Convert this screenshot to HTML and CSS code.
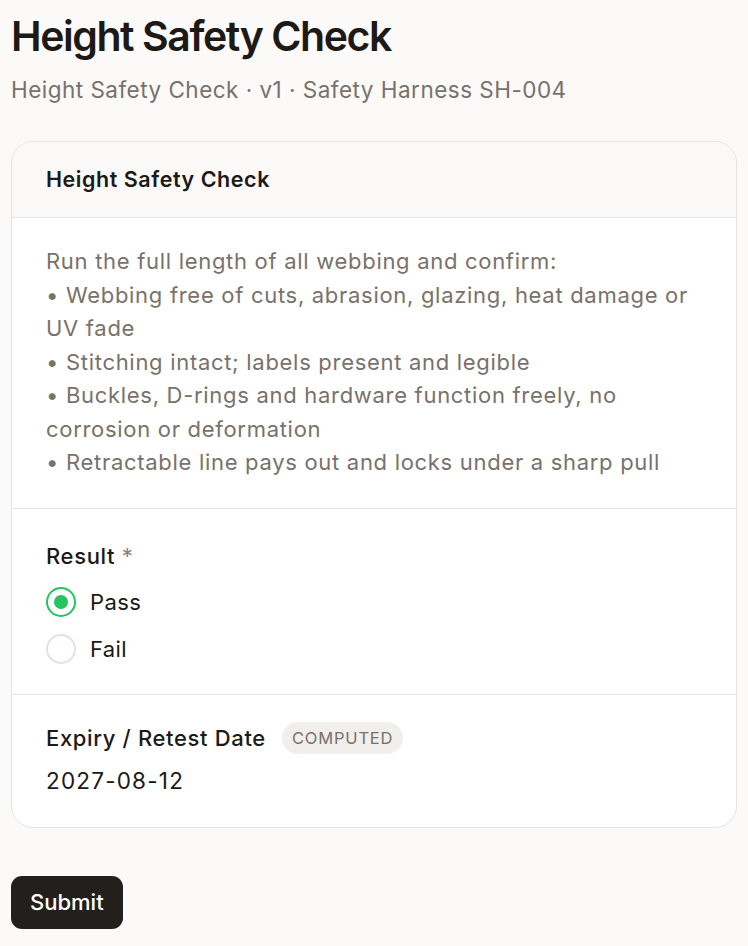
FILE: index.html
```html
<!DOCTYPE html>
<html lang="en">
<head>
<meta charset="utf-8">
<title>Height Safety Check</title>
<link rel="stylesheet" href="styles.css">
</head>
<body>
<main class="page">
  <header class="page-head">
    <h1 class="title">Height Safety Check</h1>
    <p class="subtitle">Height Safety Check · v1 · Safety Harness SH-004</p>
  </header>

  <section class="card">
    <div class="card-head">Height Safety Check</div>
    <div class="card-section desc">
      <p>Run the full length of all webbing and confirm:<br>
      • Webbing free of cuts, abrasion, glazing, heat damage or UV fade<br>
      • Stitching intact; labels present and legible<br>
      • Buckles, D-rings and hardware function freely, no corrosion or deformation<br>
      • Retractable line pays out and locks under a sharp pull</p>
    </div>
    <div class="card-section result">
      <div class="field-label">Result <span class="req">*</span></div>
      <div class="radios">
        <label class="radio-row"><span class="radio checked"></span><span>Pass</span></label>
        <label class="radio-row"><span class="radio"></span><span>Fail</span></label>
      </div>
    </div>
    <div class="card-section date">
      <div class="label-row">
        <span class="field-label">Expiry / Retest Date</span>
        <span class="badge">COMPUTED</span>
      </div>
      <div class="value">2027-08-12</div>
    </div>
  </section>

  <button class="submit" type="button">Submit</button>
</main>
</body>
</html>
```

FILE: styles.css
```css
* { box-sizing: border-box; }
html, body { margin: 0; padding: 0; }
body {
  background: #fbfaf8;
  font-family: Inter, "Noto Sans", sans-serif;
  color: #1c1917;
}
.page {
  padding: 9px 11px 16px 11px;
}
.title {
  margin: 0;
  font-size: 41px;
  line-height: 54px;
  font-weight: 600;
  letter-spacing: -0.035em;
  color: #1c1917;
}
.subtitle {
  margin: 10px 0 0 0;
  font-size: 22.5px;
  line-height: 33px;
  letter-spacing: 0.48px;
  color: #78716c;
}
.card {
  margin-top: 35px;
  background: #ffffff;
  border: 1.5px solid #e7e4df;
  border-radius: 22px;
  overflow: hidden;
}
.card-head {
  background: #faf9f7;
  padding: 22px 34px;
  font-size: 21.5px;
  line-height: 31px;
  font-weight: 600;
  letter-spacing: 0.55px;
  border-bottom: 1.5px solid #e7e4df;
}
.card-section {
  padding: 27px 34px 28px;
  border-bottom: 1.5px solid #e7e4df;
}
.card-section:last-child { border-bottom: 0; }
.desc p {
  margin: 0;
  font-size: 22px;
  line-height: 33.5px;
  letter-spacing: 0.7px;
  color: #78716c;
}
.result { padding-top: 31px; padding-bottom: 27px; }
.field-label {
  font-size: 22px;
  line-height: 33px;
  font-weight: 500;
  letter-spacing: 0.65px;
  color: #1c1917;
}
.req { color: #8a827a; font-weight: 400; }
.radios {
  display: flex;
  flex-direction: column;
  gap: 11px;
  margin-top: 11px;
}
.radio-row {
  display: flex;
  align-items: center;
  gap: 14px;
  height: 36px;
  font-size: 22px;
  letter-spacing: 0.4px;
  color: #1c1917;
}
.radio {
  width: 30px;
  height: 30px;
  border-radius: 50%;
  border: 2px solid #e6e1da;
  background: #fff;
  display: flex;
  align-items: center;
  justify-content: center;
}
.radio.checked { border-color: #22c55e; }
.radio.checked::after {
  content: "";
  width: 14px;
  height: 14px;
  border-radius: 50%;
  background: #22c55e;
}
.date { padding-top: 27px; padding-bottom: 30px; }
.label-row {
  display: flex;
  align-items: center;
  gap: 16px;
  height: 33px;
}
.badge {
  background: #f1efeb;
  color: #78716c;
  font-size: 16.5px;
  letter-spacing: 0.05em;
  font-weight: 400;
  padding: 0 10px;
  height: 32px;
  line-height: 32px;
  border-radius: 16px;
}
.value {
  margin-top: 9px;
  font-size: 22.5px;
  line-height: 33px;
  letter-spacing: 1.2px;
  color: #1c1917;
}
.submit {
  margin-top: 48px;
  background: #221f1c;
  color: #ffffff;
  border: 0;
  border-radius: 11px;
  height: 53px;
  padding: 0 19px;
  font-family: Inter, "Noto Sans", sans-serif;
  font-size: 22px;
  font-weight: 500;
  cursor: pointer;
}
```
